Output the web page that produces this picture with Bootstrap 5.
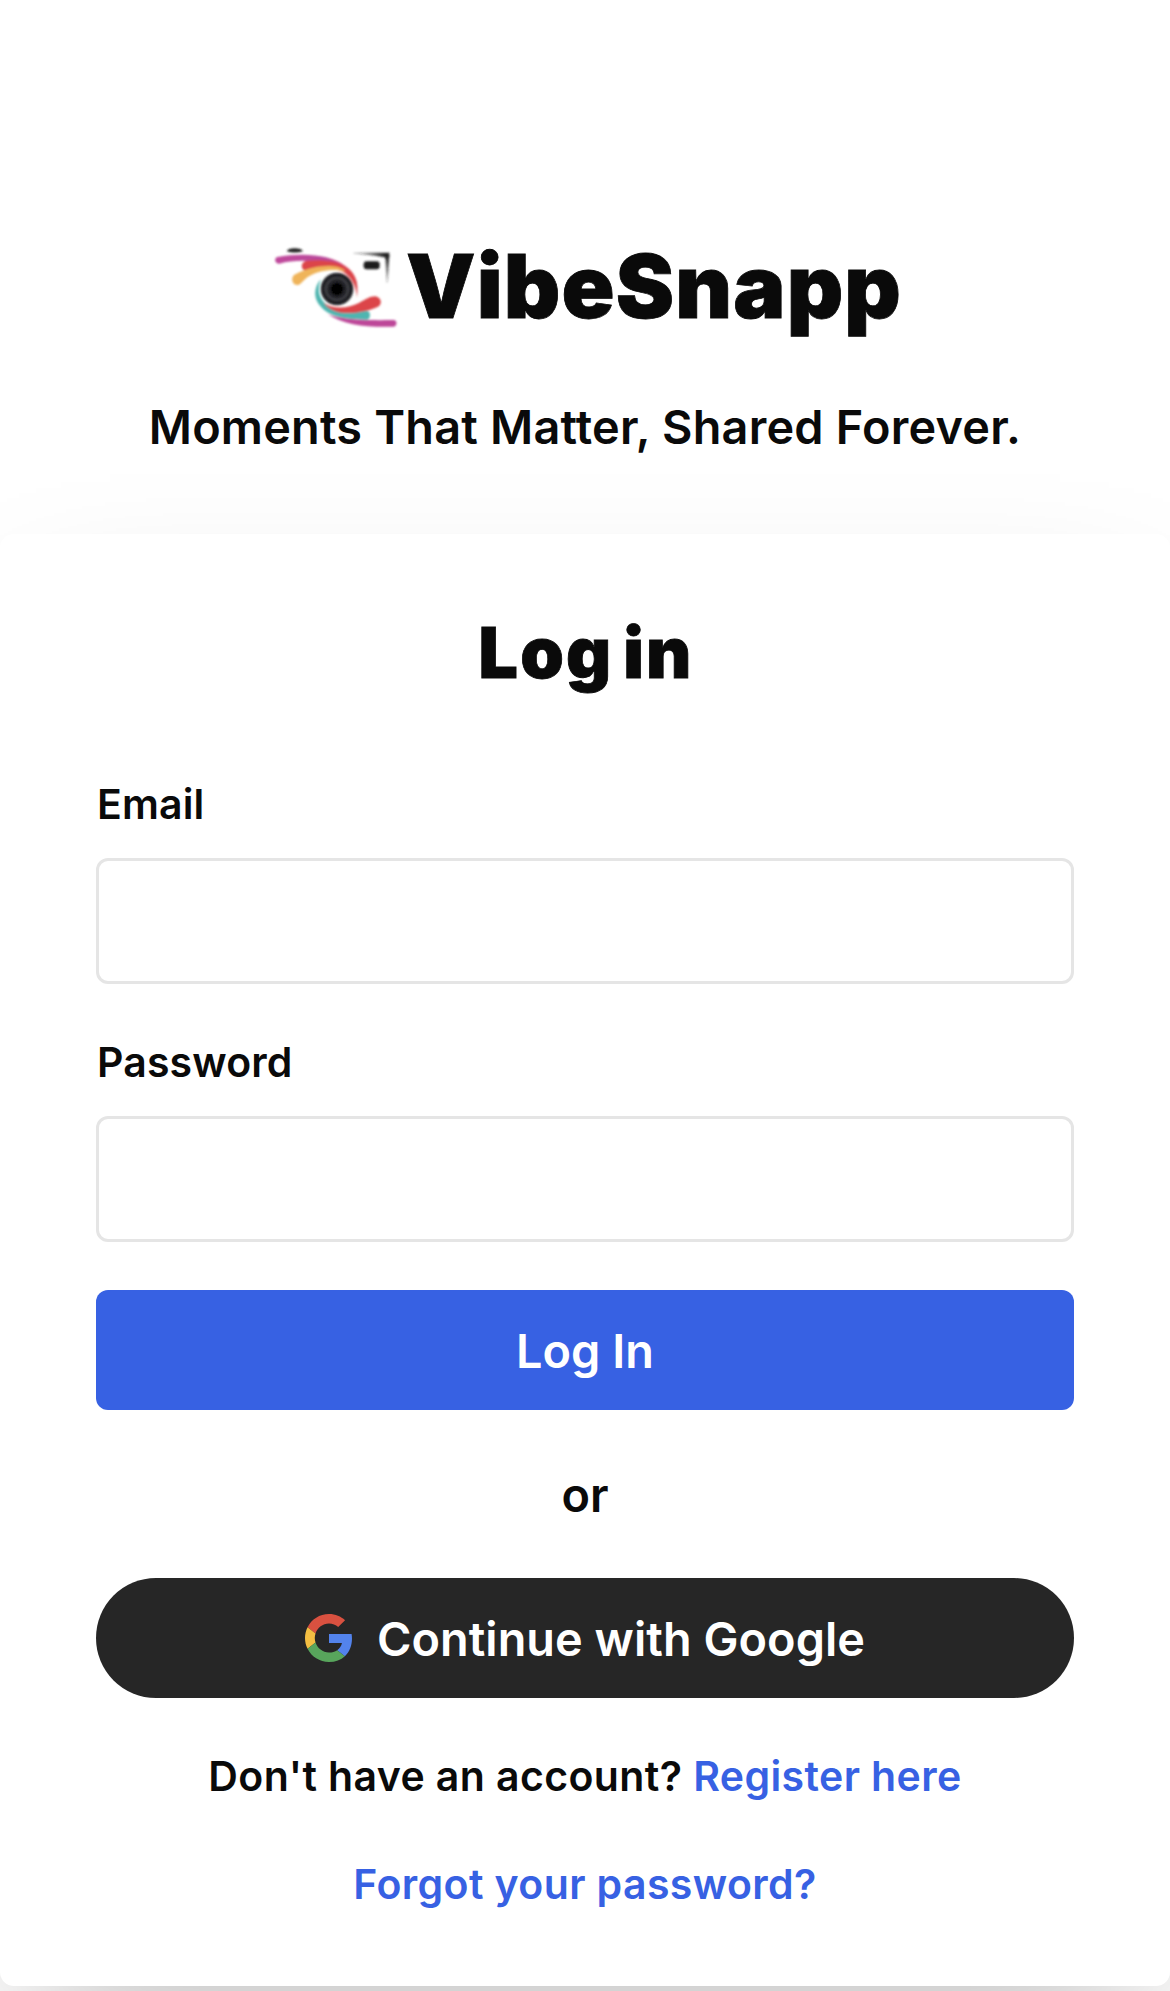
<!DOCTYPE html>
<html lang="en">
<head>
<meta charset="utf-8">
<meta name="viewport" content="width=device-width, initial-scale=1">
<title>VibeSnapp</title>
<link href="https://cdn.jsdelivr.net/npm/bootstrap@5.3.0/dist/css/bootstrap.min.css" rel="stylesheet">
<style>
  body { font-family: Inter, "Liberation Sans", sans-serif; font-weight: 600; color: #0a0a0a; background: #fff; }
  .page { height: 1991px; padding-top: 231px; }
  .brand-logo { width: 146px; height: 110px; margin-left: -8px; }
  .brand-name { font-size: 87.6px; font-weight: 900; line-height: 100px; letter-spacing: 1.15px; -webkit-text-stroke: .8px currentColor; }
  .tagline { font-size: 46.8px; line-height: 72px; letter-spacing: .22px; margin: 50px 0 71px; }
  .login-card { padding: 77px 96px 72px; border: 0; border-radius: 14px; background: #fff; color: inherit;
    box-shadow: 0 75px 150px -36px rgba(0, 0, 0, .25); }
  .login-title { font-size: 69.8px; font-weight: 900; line-height: 84px; letter-spacing: 2.1px; word-spacing: -6px; padding-left: 2px; -webkit-text-stroke: .8px currentColor; margin-bottom: 79px; }
  .text-m { font-size: 41px; line-height: 60px; letter-spacing: .15px; }
  .text-l { font-size: 46.8px; line-height: 72px; letter-spacing: .05px; }
  .login-card .form-label { margin-bottom: 24px; padding-left: 1px; }
  .login-card .form-control { height: 126px; border: 3px solid #e5e5e5; border-radius: 12px; margin-bottom: 48px; font-size: 42px; }
  .btn-login, .btn-google { height: 120px; border: 0; color: #fff; font-weight: 600; padding: 2px 0 0; }
  .btn-login { background: #3761e3; border-radius: 12px; }
  .btn-google { background: #262626; border-radius: 60px; gap: 24px; }
  .btn-google svg { margin-top: -2px; }
  .divider-text { margin: 49px 0 47px; }
  .link-brand { color: #3761e3; text-decoration: none; }
  .links { margin-top: 48px; gap: 48px; letter-spacing: .4px; }
</style>
</head>
<body>
<main class="page overflow-hidden">
  <header class="text-center">
    <div class="d-flex justify-content-center align-items-center">
      <svg class="brand-logo flex-shrink-0" viewBox="0 3 438 330" fill="none" aria-hidden="true">
        <defs>
          <filter id="soft" x="-10%" y="-10%" width="120%" height="120%"><feGaussianBlur stdDeviation="3"/></filter>
          <linearGradient id="plum" x1="45" y1="0" x2="290" y2="0" gradientUnits="userSpaceOnUse"><stop offset="0" stop-color="#c04a9c"/><stop offset=".6" stop-color="#b9479a"/><stop offset="1" stop-color="#dd4560"/></linearGradient>
          <linearGradient id="fadeH" x1="280" y1="0" x2="375" y2="0" gradientUnits="userSpaceOnUse"><stop offset="0" stop-color="#222" stop-opacity=".2"/><stop offset="1" stop-color="#222"/></linearGradient>
          <linearGradient id="fadeV" x1="0" y1="80" x2="0" y2="158" gradientUnits="userSpaceOnUse"><stop offset="0" stop-color="#222"/><stop offset="1" stop-color="#222" stop-opacity=".15"/></linearGradient>
        </defs>
        <g filter="url(#soft)">
          <path d="M80 64Q84 55 104 55Q124 55 129 64Q104 71 80 64Z" fill="#222"/>
          <path d="M52 81C105 71 158 72 198 82C252 96 292 128 292 172C282 134 246 110 202 101C154 90 104 89 58 101C43 101 42 84 52 81Z" fill="url(#plum)"/>
          <path d="M140 92C178 88 222 91 252 107C284 124 297 153 291 203C288 164 273 139 246 124C214 112 174 119 140 123C121 121 120 96 140 92Z" fill="#dc4548"/>
          <path d="M103 134C136 116 174 107 210 108C234 109 249 115 257 124C222 115 174 120 143 141C133 148 126 159 116 165C96 168 91 143 103 134Z" fill="#efb45a"/>
          <path d="M183 147C160 172 159 207 184 232C206 256 245 270 323 269C333 264 332 245 322 242C284 246 231 246 202 226C177 207 170 180 183 147Z" fill="#50b5b0"/>
          <path d="M190 218C221 239 264 235 298 218C318 208 330 199 345 199C363 200 369 222 354 230C330 242 286 251 253 249C225 247 203 235 190 218Z" fill="#dc4548"/>
          <path d="M203 252C245 267 292 272 400 270C413 271 412 288 401 290C318 292 254 286 203 252Z" fill="#bd4699"/>
          <circle cx="231" cy="177" r="49" fill="#222327"/>
          <circle cx="231" cy="177" r="33" stroke="#44454a" stroke-width="5"/>
          <circle cx="231" cy="177" r="19" fill="#030303"/>
          <rect x="311" y="94" width="48" height="24" rx="9" fill="#1a1a1a"/>
          <path d="M280 68H388V82H372C345 76 310 73 280 71Z" fill="url(#fadeH)"/>
          <path d="M374 76H388L384 158H379L377 92Z" fill="url(#fadeV)"/>
        </g>
      </svg>
      <span class="brand-name">VibeSnapp</span>
    </div>
    <p class="tagline">Moments That Matter, Shared Forever.</p>
  </header>

  <section class="card login-card">
    <h1 class="login-title text-center">Log in</h1>
    <form class="d-flex flex-column">
      <label class="form-label text-m" for="email">Email</label>
      <input class="form-control" type="email" id="email">
      <label class="form-label text-m" for="password">Password</label>
      <input class="form-control" type="password" id="password">
      <button class="btn btn-login text-l w-100" type="button">Log In</button>
    </form>
    <p class="divider-text text-l text-center">or</p>
    <button class="btn btn-google text-l w-100 d-flex align-items-center justify-content-center" type="button">
      <svg width="48" height="48" viewBox="0 0 48 48" aria-hidden="true">
        <path fill="#d95140" d="M24 9.5c3.54 0 6.71 1.22 9.21 3.6l6.85-6.85C35.9 2.38 30.47 0 24 0 14.62 0 6.51 5.38 2.56 13.22l7.98 6.19C12.43 13.72 17.74 9.5 24 9.5z"/>
        <path fill="#5383ec" d="M46.98 24.55c0-1.57-.15-3.09-.38-4.55H24v9.02h12.94c-.58 2.96-2.26 5.48-4.78 7.18l7.73 6c4.51-4.18 7.09-10.36 7.09-17.65z"/>
        <path fill="#f3be42" d="M10.53 28.59c-.48-1.45-.76-2.99-.76-4.59s.27-3.14.76-4.59l-7.98-6.19C.92 16.46 0 20.12 0 24c0 3.88.92 7.54 2.56 10.78l7.97-6.19z"/>
        <path fill="#58a55c" d="M24 48c6.48 0 11.93-2.13 15.89-5.81l-7.73-6c-2.15 1.45-4.92 2.3-8.16 2.3-6.26 0-11.57-4.22-13.47-9.91l-7.98 6.19C6.51 42.62 14.62 48 24 48z"/>
      </svg>
      <span>Continue with Google</span>
    </button>
    <div class="links text-m d-flex flex-column align-items-center">
      <div>Don't have an account? <a class="link-brand" href="#">Register here</a></div>
      <a class="link-brand" href="#">Forgot your password?</a>
    </div>
  </section>
</main>
<script src="https://cdn.jsdelivr.net/npm/bootstrap@5.3.0/dist/js/bootstrap.bundle.min.js"></script>
</body>
</html>
